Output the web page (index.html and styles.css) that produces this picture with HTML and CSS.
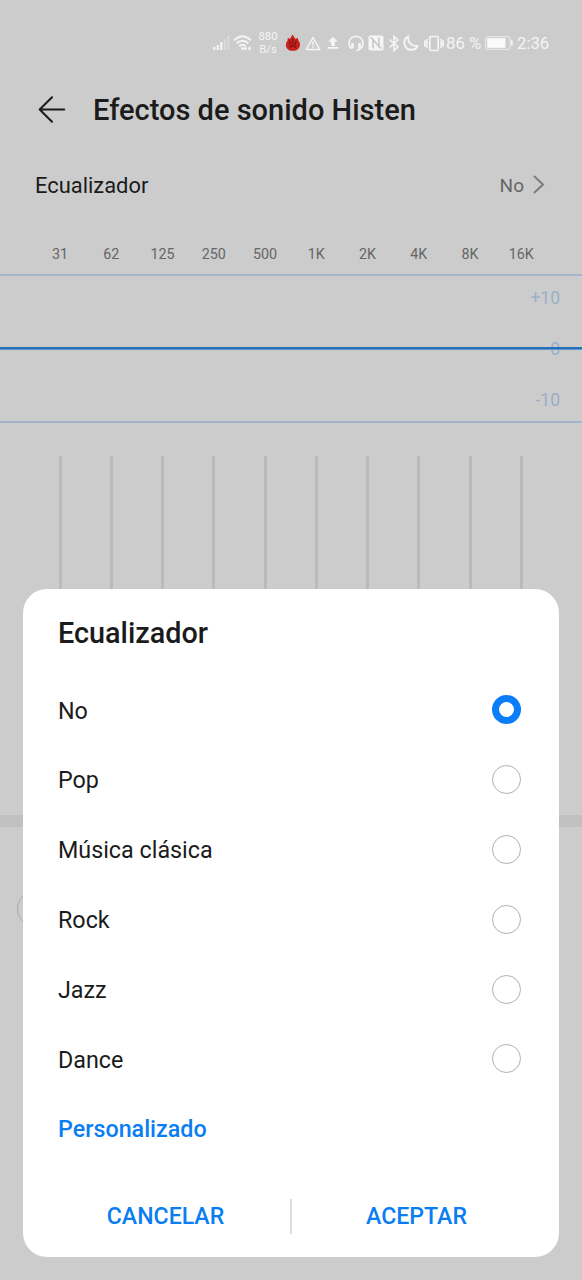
FILE: index.html
```html
<!DOCTYPE html>
<html lang="es">
<head>
<meta charset="utf-8">
<title>Efectos de sonido Histen</title>
<link rel="stylesheet" href="styles.css">
</head>
<body>
<div class="screen">
  <header class="status">
    <svg class="signal" width="18" height="16" viewBox="0 0 18 16"><path d="M2.300 12v3M5.800 10v5M9.300 7v8" stroke="#f5f5f5" stroke-width="2.200"/><path d="M12.800 4v11M16.300 1v14" stroke="#dadada" stroke-width="2.200"/></svg>
    <svg class="wifi" width="20" height="18" viewBox="0 0 20 18" fill="none" stroke="#f5f5f5" stroke-width="1.900"><path d="M1 6.200Q9.500-1.800 18 6.200M3.700 9.300Q9.500 4 15.300 9.300M6.300 12.100Q9.500 9.200 12.700 12.100"/><circle cx="9.500" cy="14.500" r="1.400" fill="#f5f5f5" stroke="none"/><path d="M12.500 12.500v4M16.500 12.500v4M11.200 14.500h2.600M15.200 14.500h2.600" stroke-width="1.300"/></svg>
    <div class="speed"><span>880</span><span>B/s</span></div>
    <svg class="flame" width="16" height="18" viewBox="0 0 16 18"><path d="M2.800 4L5 4.700L7.600.5L10.200 4.700L12.800 4L13.500 6.800C16.500 10 15 16.800 7.800 16.800S-.5 10 2.500 6.800Z" fill="#c9211d"/><path d="M4.500 6.500l1 4.500M7.700 4.500v6M11 6.500l-1 4.500M4.500 13.500l2-2 1.200 1 1.200-1 2 2" stroke="#7c1512" stroke-width="1.200" fill="none"/></svg>
    <svg class="warn" width="16" height="15" viewBox="0 0 16 15" fill="none" stroke="#f5f5f5" stroke-width="1.500"><path d="M8 1.500L14.800 13.500H1.200Z" stroke-linejoin="round"/><path d="M8 5.500v4M8 10.500v1.500"/></svg>
    <svg class="upload" width="12" height="14" viewBox="0 0 12 14" fill="#f5f5f5"><path d="M6 .7L10.800 5.700H7.800V10H4.200V5.700H1.200ZM.8 11h10.400v1.800H.8Z"/></svg>
    <svg class="headset" width="16" height="17" viewBox="0 0 16 17" fill="none" stroke="#f5f5f5" stroke-width="1.700"><path d="M3.800 13.500C-.5 11 .2 1.500 8 1.500S16.500 11 12.200 13.500Q11 15.500 8.500 15.500"/><path d="M4.500 8v5.500M11.500 8v5.500" stroke-width="2.500"/></svg>
    <svg class="nfc" width="16" height="16" viewBox="0 0 16 16"><rect x=".5" y=".5" width="15" height="15" rx="2" fill="#f5f5f5"/><path d="M5 13.500V4.500L11 11.500V2.500M2.500 2.500L5 4.500M13.500 13.500L11 11.500" fill="none" stroke="#c6c6c6" stroke-width="1.500"/></svg>
    <svg class="bluetooth" width="12" height="17" viewBox="0 0 12 17" fill="none" stroke="#f5f5f5" stroke-width="1.600"><path d="M1.500 4.500L10 12L6 15.500V1.500L10 5L1.500 12.500"/></svg>
    <svg class="moon" width="16" height="16" viewBox="0 0 16 16" fill="none" stroke="#f5f5f5" stroke-width="1.900" stroke-linejoin="round"><path d="M5.300 1.300C-1 4.500.5 14.800 8.500 14.800C11.500 14.800 13.700 13 14.700 11C8.500 12 4.300 7 5.300 1.300Z"/></svg>
    <svg class="vibrate" width="20" height="17" viewBox="0 0 20 17" fill="none" stroke="#f5f5f5" stroke-width="1.600"><rect x="5.800" y="1.500" width="8.400" height="14" rx="1"/><path d="M3.300 4L2.300 6L3.300 8L2.300 10L3.300 13M.8 5.500v6M16.700 4L17.700 6L16.700 8L17.700 10L16.700 13M19.200 5.500v6"/></svg>
    <span class="percent">86 %</span>
    <svg class="battery" width="28" height="14" viewBox="0 0 28 14"><rect x=".7" y=".7" width="24.300" height="12.600" rx="1.500" fill="none" stroke="#ededed"/><path d="M2.200 2.200h18.300v9.600H2.200Z" fill="#fafafa"/><path d="M26.800 4.300v5.400" stroke="#f5f5f5" stroke-width="1.600"/></svg>
    <span class="clock">2:36</span>
  </header>

  <div class="titlebar">
    <svg width="28" height="28" viewBox="0 0 28 28" fill="none" stroke="#1b1b1b" stroke-width="2" stroke-linecap="round" stroke-linejoin="round"><path d="M14 1.200L1.700 13.500L14 25.800M2 13.500H26.200"/></svg>
    <h1>Efectos de sonido Histen</h1>
  </div>

  <div class="setting">
    <span class="setting-name">Ecualizador</span>
    <span class="setting-value">No</span>
    <svg width="14" height="20" viewBox="0 0 14 20" fill="none" stroke="#7c7c7c" stroke-width="2"><path d="M2 1L11 9.500L2 18"/></svg>
  </div>

  <div class="bands labels"><span>31</span><span>62</span><span>125</span><span>250</span><span>500</span><span>1K</span><span>2K</span><span>4K</span><span>8K</span><span>16K</span></div>
  <div class="graph"><span>+10</span><span>0</span><span>-10</span><i class="curve"></i></div>
  <div class="bands tracks"><i></i><i></i><i></i><i></i><i></i><i></i><i></i><i></i><i></i><i></i></div>
  <div class="separator"></div>
  <div class="knob"></div>

  <section class="dialog">
    <h2>Ecualizador</h2>
    <ul>
      <li><span>No</span><i class="radio on"></i></li>
      <li><span>Pop</span><i class="radio"></i></li>
      <li><span>Música clásica</span><i class="radio"></i></li>
      <li><span>Rock</span><i class="radio"></i></li>
      <li><span>Jazz</span><i class="radio"></i></li>
      <li><span>Dance</span><i class="radio"></i></li>
      <li class="custom"><span>Personalizado</span></li>
    </ul>
    <div class="actions"><span class="cancel">CANCELAR</span><i></i><span class="accept">ACEPTAR</span></div>
  </section>
</div>
</body>
</html>
```
FILE: styles.css
```css
* { box-sizing: border-box; }
body { margin: 0; background: #ccc; font-family: Roboto, "Noto Sans", sans-serif; color: #1b1b1b; }
h1, h2, ul { margin: 0; padding: 0; font-weight: 500; }
svg { display: block; flex: none; }
.screen { position: relative; width: 582px; height: 1280px; overflow: hidden; background: #ccc; }

.status { display: flex; align-items: center; height: 86px; padding-left: 212px; color: #f5f5f5; white-space: nowrap; }
.wifi { margin-left: 3px; }
.speed { display: flex; flex-direction: column; align-items: center; width: 20px; margin-left: 5px; font-size: 11.3px; line-height: 13px; }
.flame { margin-left: 7px; }
.warn { margin-left: 4px; }
.upload { margin-left: 6px; }
.headset { margin-left: 9px; }
.nfc { margin-left: 4px; }
.bluetooth { margin-left: 4px; }
.moon { margin-left: 3px; }
.vibrate { margin-left: 5px; }
.percent { width: 36px; margin-left: 2px; font-size: 16.8px; }
.battery { margin-left: 3px; }
.clock { margin-left: 4px; font-size: 16.7px; }

.titlebar { display: flex; align-items: center; height: 48px; padding-left: 38px; }
.titlebar h1 { margin-left: 27px; font-size: 29px; line-height: 48px; }

.setting { display: flex; align-items: center; height: 102px; padding: 0 36px 0 35px; }
.setting-name { flex: 1; font-size: 21.9px; }
.setting-value { margin-right: 8px; font-size: 19px; color: #666; }

.bands { display: grid; grid-template-columns: repeat(10, 51.25px); padding-left: 34.4px; justify-items: center; }
.labels { height: 38px; line-height: 37px; font-size: 14.3px; color: #666; }
.graph { position: relative; display: flex; flex-direction: column; align-items: flex-end; height: 149px; padding: 0 22px 0 0; border-top: 2px solid #a6b5cb; border-bottom: 2px solid #a3b4c8; color: #9aafc9; font-size: 17.5px; }
.graph span { flex: none; height: 51px; line-height: 44px; }
.curve { position: absolute; left: 0; right: 0; top: 71px; height: 3px; background: #2670b7; border-bottom: 1px solid #5b95d0; }
.tracks { height: 159px; margin-top: 33px; }
.tracks i { width: 3px; background: #bababa; }
.separator { height: 12px; margin-top: 200px; background: #c0c0c0; }
.knob { width: 36px; height: 36px; margin: 64px 0 0 17px; border: 1px solid #aaa; border-radius: 50%; }

.dialog { position: absolute; left: 23px; top: 589px; width: 536px; height: 667.5px; padding: 0 35px; border-radius: 24px; background: #fff; }
.dialog h2 { height: 86px; font-size: 28.8px; line-height: 89px; }
.dialog ul { list-style: none; }
.dialog li { display: flex; align-items: center; justify-content: space-between; height: 69.8px; padding-right: 3px; font-size: 23.3px; font-weight: 400; }
.dialog li span { padding-top: 1.5px; }
.dialog li.custom { color: #0a7df2; font-weight: 500; }
.radio { width: 29px; height: 29px; border: 1.5px solid #b0b0b0; border-radius: 50%; }
.radio.on { border: 7px solid #0a7df9; }
.actions { display: grid; grid-template-columns: 232px 1.5px 250px; align-items: center; height: 35px; margin-top: 35px; color: #0a7df2; font-size: 23.1px; font-weight: 500; }
.actions span { padding-top: 1px; text-align: center; }
.actions i { height: 35px; background: #dedede; }
.actions .cancel { padding-right: 17px; }
```
